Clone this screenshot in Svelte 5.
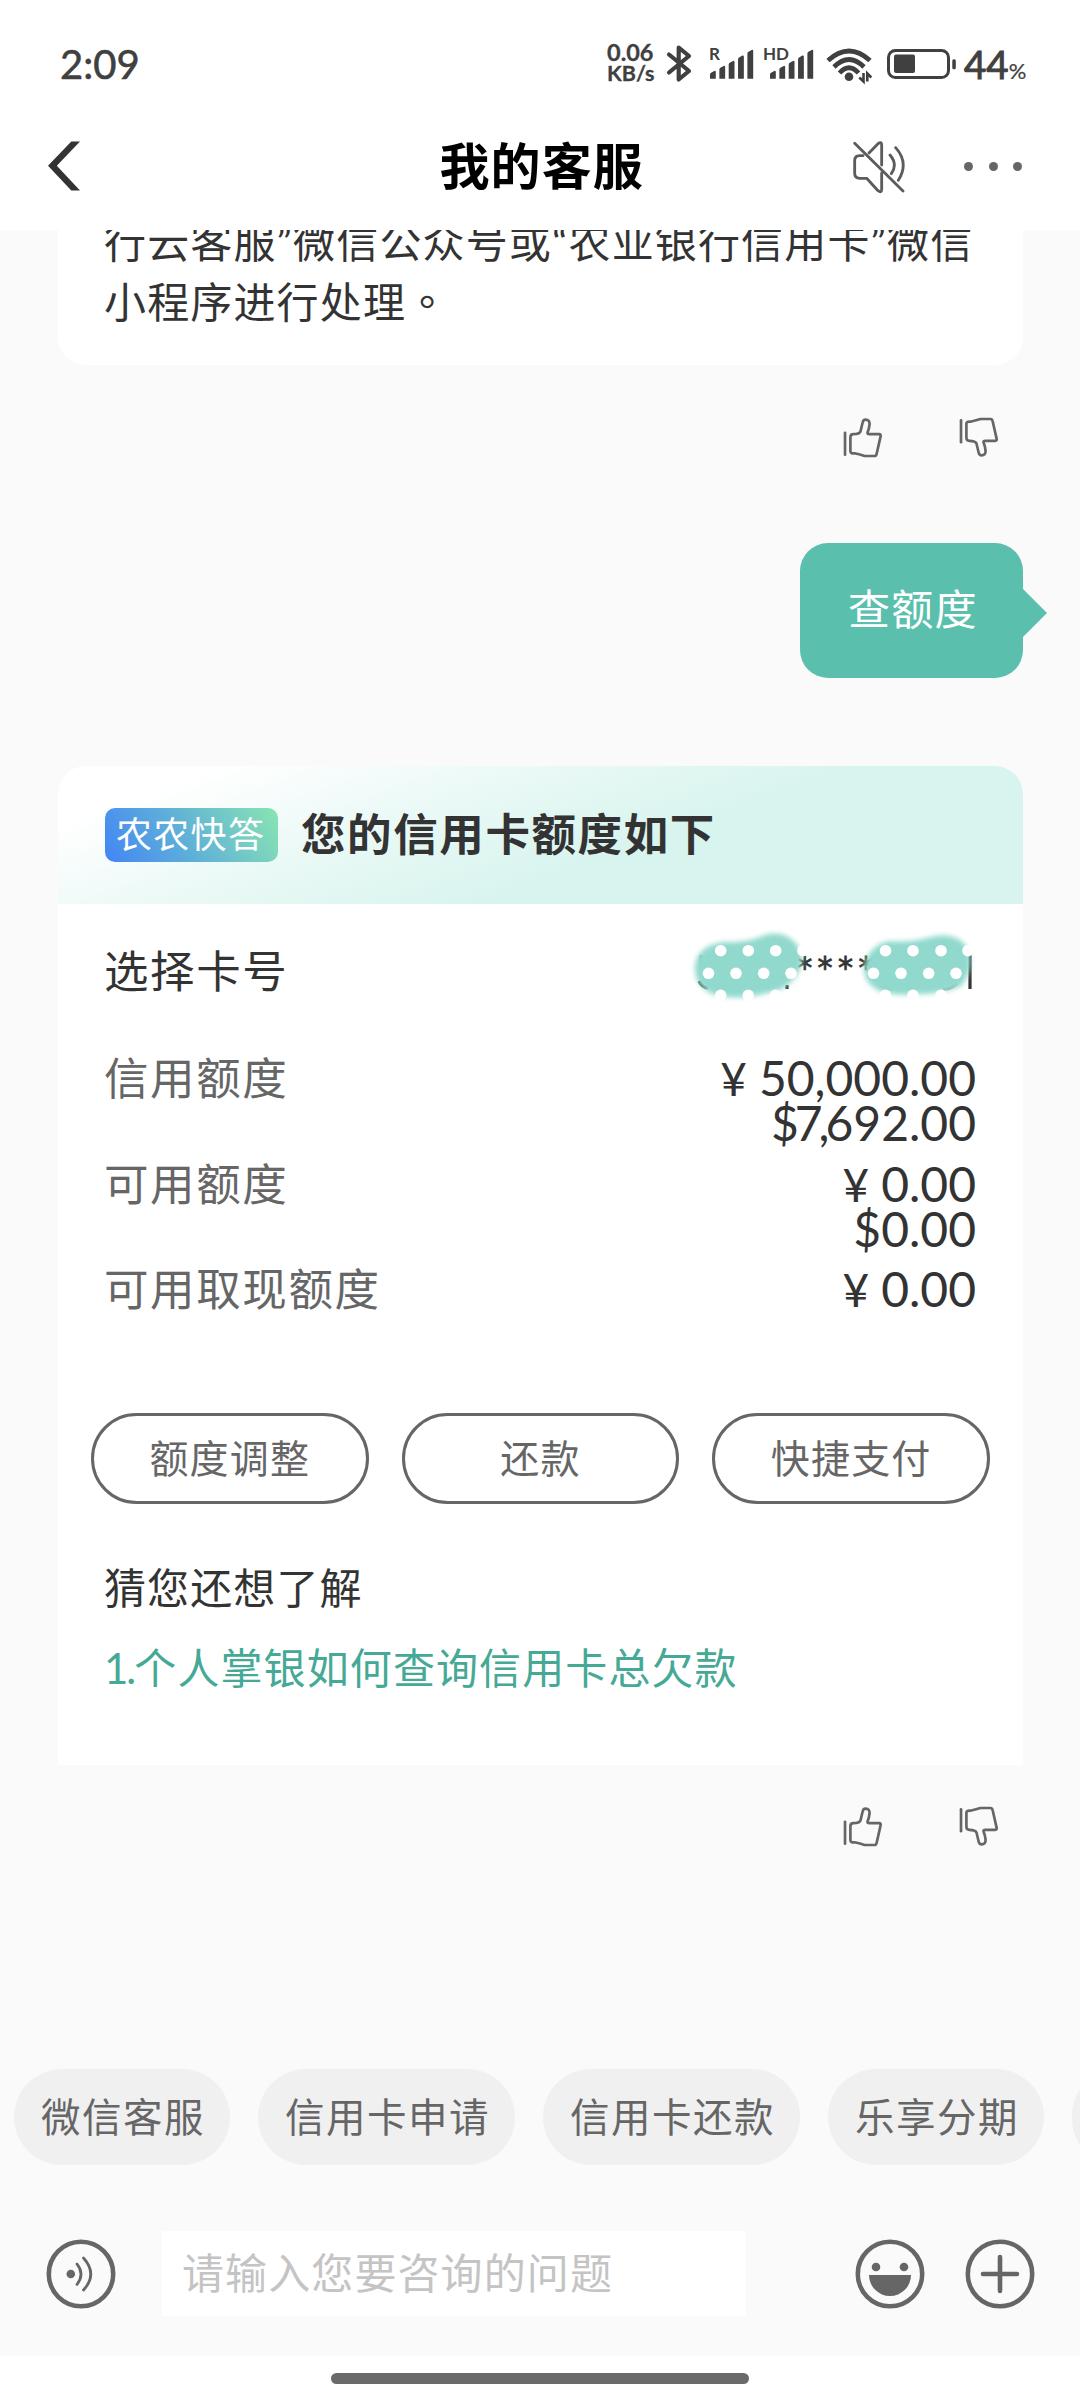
<script lang="ts">
   // lead is the part of the value that is set tighter
   type Amount = { sign?: string; lead?: string; value: string };
   type Limit = { label: string; amounts: Amount[] };

   const time = "2:09";
   const limits: Limit[] = [
      {
         label: "信用额度",
         amounts: [{ sign: "¥", value: "50,000.00" }, { lead: "$7,", value: "692.00" }],
      },
      { label: "可用额度", amounts: [{ sign: "¥", value: "0.00" }, { value: "$0.00" }] },
      { label: "可用取现额度", amounts: [{ sign: "¥", value: "0.00" }] },
   ];
   const actions = ["额度调整", "还款", "快捷支付"];
   const chips = ["微信客服", "信用卡申请", "信用卡还款", "乐享分期", ""];
   const barTops = [36, 31, 26, 20.7, 15];

   // white dots of the mosaic brush
   const dots = [
      [40.7, 40.7], [68.3, 40.7], [95.7, 40.7], [123, 40.7],
      [28.5, 63.3], [56, 63.3], [83.7, 63.3], [111, 63.3],
      [40.7, 85.3], [68.3, 85.3], [95.5, 85.3],
      [205.5, 40.7], [233, 40.7], [261, 40.7], [288, 40.7],
      [193.5, 63.3], [221, 63.3], [248.7, 63.3], [276, 63.3],
      [205.5, 85.3], [233, 85.3], [261, 85.3],
   ];
</script>

{#snippet thumb(down: boolean)}
   <svg class="thumb" class:down viewBox="36 36 122 122">
      <path d="M45 83V148" />
      <path
         d="M61 96q0-9 9-9q18 0 21-8l6-25q2-10 9-10q13 0 12 14q-1 12-6 24q-1 5 5 5h30q5 0 4 6L139 146q-1 6-7 6H103q-12-4-30-8q-12 1-12-6Z"
      />
   </svg>
{/snippet}

{#snippet feedback()}
   <div class="feedback">
      {@render thumb(false)}
      {@render thumb(true)}
   </div>
{/snippet}

{#snippet signal(tag: string, x: number)}
   <svg class="signal" width={x + 46} height="60">
      <text x="0" y="25">{tag}</text>
      {#each barTops as top, i}
         <path d="M{x + i * 9.35} 43.7V{top + 3.5}q0-1.5 1.5-2l2.8-1.6q1.5-.5 1.5 1V43.7Z" />
      {/each}
   </svg>
{/snippet}

<div class="screen">
   <header>
      <div class="status">
         <span class="time">{time}</span>
         <div class="speed"><span>0.06</span><span class="unit">KB/s</span></div>
         <svg class="bluetooth" width="28" height="60">
            <path d="M4 19.5L24 36L13.7 44.5V12.5L24 21L4 37.5" />
         </svg>
         {@render signal("R", 1)}
         {@render signal("HD", 7)}
         <svg class="wifi" width="48" height="60">
            <path d="M3 25.5Q24 6.5 45 25.5" />
            <path d="M9 32Q24 17 39 32" />
            <path d="M14.5 38Q24 27.5 33.5 38" />
            <circle cx="24" cy="41.8" r="4.3" />
            <path class="arrows" d="M38.5 38V46.5L34.3 42.5M42.3 46.5V38.5L46.3 42.5" />
         </svg>
         <svg class="battery" width="71" height="60">
            <rect class="shell" x="2.5" y="15.5" width="60" height="27" rx="7" />
            <rect x="8" y="19.5" width="21" height="18.5" rx="2" />
            <rect x="66.3" y="24.3" width="3.5" height="10" rx="1.5" />
         </svg>
         <span class="percent">44<small>%</small></span>
      </div>
      <div class="nav">
         <svg class="back" width="34" height="50">
            <path d="M24.3 .5H33L9.8 24.7L33 49.5H24.3L1 24.7Z" />
         </svg>
         <h1>我的客服</h1>
         <svg class="mute" viewBox="125 310 165 165">
            <path d="M158 360H148q-15 0-15 15V413q0 15 15 15H169L203 465q11 8 11-4V412" />
            <path d="M176 352L203 324q11-8 11 4V388" />
            <path d="M239 358q24 28 4 56M256 336q41 46 8 98M133 323L278 466" />
         </svg>
         <div class="more"><i></i><i></i><i></i></div>
      </div>
   </header>

   <main>
      <div class="card first">
         行云客服”微信公众号或“农业银行信用卡”微信<br />小程序进行处理<span class="stop">。</span>
      </div>
      {@render feedback()}

      <div class="bubble">查额度</div>

      <div class="card answer">
         <div class="title">
            <span class="tag">农农快答</span>
            <span class="heading">您的信用卡额度如下</span>
         </div>
         <div class="row number">
            <span>选择卡号</span>
            <svg class="masked" viewBox="10 15 285 80" width="285" height="80">
               <defs>
                  <filter id="soft" x="-20%" y="-20%" width="140%" height="140%">
                     <feGaussianBlur stdDeviation="2.6" />
                  </filter>
               </defs>
               <text x="117.2" y="67.5">****</text>
               <path class="stroke faint" d="M21 45V60M200 75Q206 79 213 79M263 79Q272 79 277 73" />
               <path class="stroke" d="M19 71Q22 77 28 78M107 75V79M290 45V79" />
               <g filter="url(#soft)">
                  <path
                     class="brush"
                     d="M15 56Q17 36 43 32Q66 33 80 27Q103 17 118 36Q126 49 118 63Q107 81 87 83Q62 90 38 86Q14 79 15 56Z"
                  />
                  <path
                     class="brush"
                     d="M184 57Q188 36 209 31Q230 33 251 27Q279 21 289 41Q294 60 281 76Q262 84 240 84Q216 86 202 82Q184 75 184 57Z"
                  />
               </g>
               {#each dots as [cx, cy]}
                  <circle {cx} {cy} r="5.8" />
               {/each}
            </svg>
         </div>
         {#each limits as limit}
            <div class="row">
               <span class="label">{limit.label}</span>
               <div class="amounts">
                  {#each limit.amounts as { sign, lead, value }}
                     <div>
                        {#if sign}<b>{sign}</b>{/if}{#if lead}<span class="lead">{lead}</span>{/if}{value}
                     </div>
                  {/each}
               </div>
            </div>
         {/each}
         <div class="actions">
            {#each actions as action}
               <button>{action}</button>
            {/each}
         </div>
         <p class="guess">猜您还想了解</p>
         <p class="link"><span class="index">1.</span>个人掌银如何查询信用卡总欠款</p>
      </div>
      {@render feedback()}

      <div class="chips">
         {#each chips as chip}
            <span>{chip}</span>
         {/each}
      </div>

      <div class="bar">
         <svg width="72" height="72">
            <circle cx="36" cy="36" r="32.2" />
            <circle class="solid" cx="25.8" cy="36" r="4.3" />
            <path class="thin" d="M32 26Q40 36 32 46.5M38.5 20Q53 36 38.5 52" />
         </svg>
         <div class="input">请输入您要咨询的问题</div>
         <svg class="smile" width="72" height="72">
            <circle cx="36" cy="36" r="32.2" />
            <circle class="solid" cx="22" cy="29" r="4.3" />
            <circle class="solid" cx="50" cy="29" r="4.3" />
            <path class="solid" d="M15 37H57A21 21 0 0 1 15 37Z" />
         </svg>
         <svg class="plus" width="72" height="72">
            <circle cx="36" cy="36" r="32.2" />
            <path d="M19 36H53M36 19V53" />
         </svg>
      </div>
   </main>
   <footer><div class="home"></div></footer>
</div>

<style>
   :global(body) {
      margin: 0;
   }
   .screen {
      width: 1080px;
      height: 2400px;
      overflow: hidden;
      display: flex;
      flex-direction: column;
      background: #fff;
      color: #333;
      font-family: Lato, "Noto Sans CJK SC", sans-serif;
      font-size: 42px;
      letter-spacing: 1.1px;
      font-weight: 400;
   }
   header {
      height: 230px;
      flex: none;
      background: #fff;
   }
   svg {
      flex: none;
      display: block;
   }

   .status {
      display: flex;
      height: 60px;
      padding: 35px 51px 0 60px;
      color: #404040;
      fill: #404040;
      letter-spacing: 0;
      -webkit-text-stroke: 0.6px #404040;
   }
   .time {
      font-size: 40px;
      line-height: 58px;
      margin-right: auto;
   }
   .speed {
      width: 50px;
      padding-top: 7px;
      display: flex;
      flex-direction: column;
      font-size: 23.5px;
      font-weight: 700;
      line-height: 21px;
      -webkit-text-stroke: 0.3px #404040;
   }
   .unit {
      font-size: 21.5px;
   }
   .bluetooth {
      margin-left: 8px;
      fill: none;
      stroke: #404040;
      stroke-width: 4.2;
      stroke-linecap: round;
      stroke-linejoin: round;
   }
   .signal {
      margin-left: 16px;
      font-size: 17px;
      font-weight: 700;
      -webkit-text-stroke: 0.2px #404040;
   }
   .signal + .signal {
      margin-left: 7px;
   }
   .wifi {
      margin-left: 9px;
   }
   .wifi path {
      fill: none;
      stroke: #404040;
      stroke-width: 4.8;
   }
   .wifi .arrows {
      stroke-width: 2.6;
   }
   .battery {
      margin-left: 13px;
   }
   .battery .shell {
      fill: none;
      stroke: #404040;
      stroke-width: 3;
   }
   .percent {
      width: 65px;
      margin-left: 7px;
      font-size: 38.5px;
      line-height: 58px;
      white-space: nowrap;
      -webkit-text-stroke: 1px #404040;
   }
   .percent small {
      font-size: 22px;
      -webkit-text-stroke: 0.2px #404040;
   }

   .nav {
      display: flex;
      align-items: center;
      height: 142px;
      padding: 0 58px 0 47px;
   }
   .back {
      fill: #333;
   }
   h1 {
      width: 210px;
      margin: 0 auto 0 358.5px;
      color: #000;
      font-size: 50px;
      font-weight: 700;
      line-height: 70px;
   }
   .mute {
      width: 55px;
      height: 55px;
      margin-right: 57px;
      fill: none;
      stroke: #5c5c5c;
      stroke-width: 8.5;
      stroke-linecap: round;
      stroke-linejoin: round;
   }
   .more {
      display: flex;
      gap: 15.4px;
   }
   .more i {
      width: 9px;
      height: 9px;
      border-radius: 50%;
      background: #666;
   }

   main {
      height: 2126px;
      flex: none;
      overflow: hidden;
      display: flex;
      flex-direction: column;
      background: #fafafa;
   }
   .card {
      box-sizing: border-box;
      width: 965px;
      margin-left: 58px;
      flex: none;
      background: #fff;
   }
   .first {
      height: 175px;
      margin-top: -40px;
      padding: 23px 46px 0;
      line-height: 59.6px;
      letter-spacing: 1.15px;
      white-space: nowrap;
      border-radius: 0 0 28px 28px;
   }
   .stop {
      font-family: "Noto Sans CJK TC", sans-serif;
      line-height: 0;
   }
   .feedback {
      display: flex;
      justify-content: flex-end;
      gap: 75px;
      flex: none;
      height: 41px;
      padding: 52px 81px 0 0;
   }
   .thumb {
      width: 41px;
      height: 41px;
      fill: none;
      stroke: #666;
      stroke-width: 8;
      stroke-linecap: round;
      stroke-linejoin: round;
   }
   .thumb.down {
      transform: scaleY(-1);
   }
   .bubble {
      position: relative;
      align-self: flex-end;
      flex: none;
      box-sizing: border-box;
      width: 223px;
      height: 135px;
      margin: 85px 57px 0 0;
      padding-left: 48px;
      border-radius: 28px;
      background: #5bbfae;
      color: #fff;
      line-height: 133px;
      letter-spacing: 1.3px;
   }
   .bubble::after {
      content: "";
      position: absolute;
      left: 100%;
      top: 46px;
      border: 24px solid transparent;
      border-left-color: #5bbfae;
      border-right: 0;
   }

   .answer {
      height: 999px;
      margin-top: 88px;
      border-radius: 28px 28px 0 0;
      overflow: hidden;
   }
   .title {
      display: flex;
      align-items: center;
      height: 138px;
      padding-left: 47px;
      font-size: 44.5px;
      font-weight: 700;
      letter-spacing: 1.6px;
      background: linear-gradient(160deg, #fff 12%, #e3f7f3 45%, #d8f4ee 60%, #d9f4ee 100%);
   }
   .tag {
      box-sizing: border-box;
      width: 173px;
      height: 54px;
      margin-right: 23px;
      padding-left: 11px;
      border-radius: 10px;
      background: linear-gradient(60deg, #4285f5, #5fb0d8 45%, #88e5b2);
      color: #fff;
      font-size: 36px;
      font-weight: 400;
      line-height: 52px;
      letter-spacing: 1.3px;
   }
   .heading {
      padding-bottom: 8px;
   }
   .row {
      display: flex;
      justify-content: space-between;
      height: 105.5px;
      padding: 0 47px 0 46px;
      font-size: 44.5px;
      line-height: 60px;
      letter-spacing: 1.6px;
   }
   .number {
      height: 107px;
      padding-top: 37px;
   }
   .label {
      color: #666;
   }
   .masked {
      margin-top: -16px;
      margin-right: 1px;
      overflow: visible;
      fill: #fff;
   }
   .masked text {
      fill: #333;
      stroke: #333;
      stroke-width: 0.8;
      font-family: "DejaVu Sans", sans-serif;
      font-size: 30px;
      letter-spacing: 5.4px;
   }
   .masked .stroke {
      fill: none;
      stroke: #333;
      stroke-width: 3.2;
   }
   .masked .faint {
      opacity: 0.5;
   }
   .masked .brush {
      fill: #91d9cd;
   }
   .amounts {
      display: flex;
      flex-direction: column;
      align-items: flex-end;
      padding-top: 8px;
      font-size: 48px;
      line-height: 44px;
      letter-spacing: 0;
   }
   .amounts b {
      font-weight: 400;
      margin-right: 12px;
      font-size: 46px;
   }
   .lead {
      letter-spacing: -4px;
   }
   .actions {
      display: flex;
      gap: 33px;
      padding: 48px 33px 0;
   }
   button {
      width: 278px;
      height: 91px;
      padding: 0 0 4px;
      border: 3px solid #666;
      border-radius: 46px;
      background: #fff;
      color: #666;
      font: inherit;
      font-size: 39px;
      letter-spacing: 1.2px;
   }
   p {
      margin: 0 46px;
      line-height: 60px;
   }
   .guess {
      margin-top: 54px;
   }
   .link {
      margin-top: 20px;
      color: #45a995;
   }
   .index {
      letter-spacing: -2px;
   }

   .answer + .feedback {
      padding-top: 41px;
   }
   .chips {
      display: flex;
      gap: 28px;
      flex: none;
      margin-top: 222px;
      padding-left: 14px;
      color: #666;
   }
   .chips span {
      flex: none;
      min-width: 40px;
      height: 96px;
      padding: 0 25px 0 27px;
      border-radius: 48px;
      background: #f0f0f0;
      font-size: 39.5px;
      line-height: 95px;
      letter-spacing: 1.5px;
   }
   .bar {
      display: flex;
      align-items: center;
      height: 85px;
      flex: none;
      margin-top: 66px;
      padding-left: 45px;
   }
   .bar svg {
      fill: none;
      stroke: #666;
      stroke-width: 4.6;
      stroke-linecap: round;
   }
   .bar .solid {
      fill: #666;
      stroke: none;
   }
   .bar .thin {
      stroke-width: 2.8;
   }
   .input {
      box-sizing: border-box;
      width: 584px;
      height: 85px;
      margin-left: 45px;
      padding-left: 20px;
      background: #fff;
      color: #c4c4c4;
      line-height: 84px;
   }
   .smile {
      margin-left: 108px;
   }
   .plus {
      margin-left: 38px;
   }
   footer {
      display: flex;
      justify-content: center;
      padding-top: 17px;
   }
   .home {
      width: 418px;
      height: 11px;
      border-radius: 6px;
      background: #6a6a6a;
   }
</style>
